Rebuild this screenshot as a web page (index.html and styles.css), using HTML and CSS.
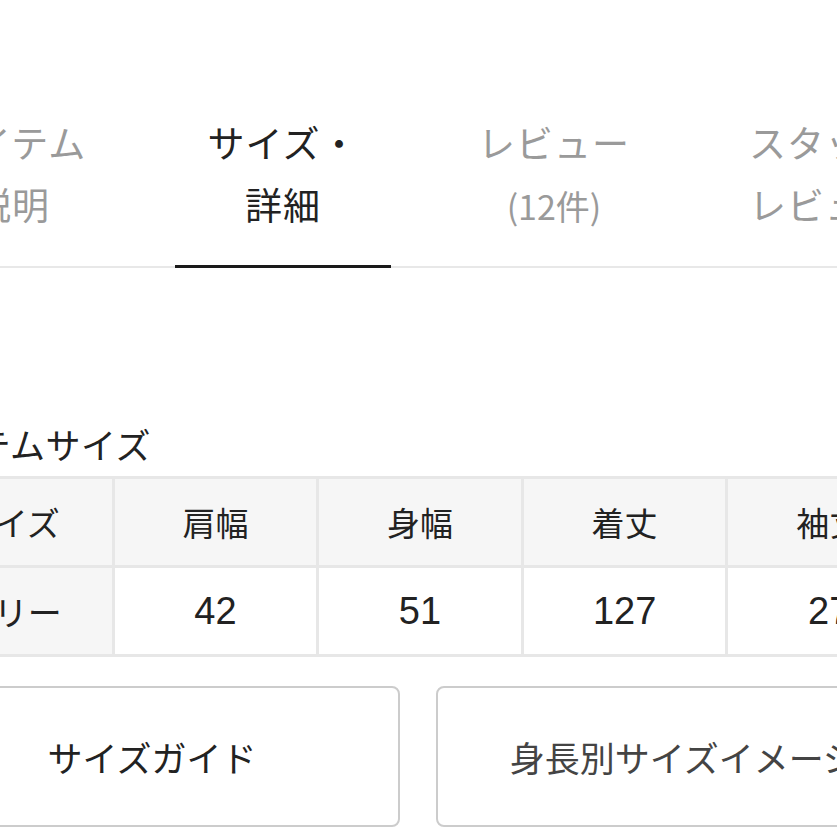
FILE: index.html
```html
<!DOCTYPE html>
<html lang="ja">
<head>
<meta charset="utf-8">
<title>サイズ・詳細</title>
<link rel="stylesheet" href="styles.css">
</head>
<body>
<div class="page">
  <nav class="tabs">
    <div class="tab">アイテム<br>説明</div>
    <div class="tab active">サイズ・<br>詳細</div>
    <div class="tab">レビュー<br><span class="count">(12件)</span></div>
    <div class="tab">スタッフ<br>レビュー</div>
  </nav>

  <section class="size-section">
    <h2 class="section-title">アイテムサイズ</h2>
    <table class="size-table">
      <colgroup>
        <col class="col"><col class="col"><col class="col"><col class="col"><col class="col">
      </colgroup>
      <thead>
        <tr>
          <th>サイズ</th>
          <th>肩幅</th>
          <th>身幅</th>
          <th>着丈</th>
          <th>袖丈</th>
        </tr>
      </thead>
      <tbody>
        <tr>
          <th class="row-head">フリー</th>
          <td class="num">42</td>
          <td class="num">51</td>
          <td class="num">127</td>
          <td class="num">27</td>
        </tr>
      </tbody>
    </table>

    <div class="buttons">
      <button class="btn">サイズガイド</button>
      <button class="btn btn-alt">身長別サイズイメージ</button>
    </div>
  </section>
</div>
</body>
</html>
```

FILE: styles.css
```css
html, body {
  margin: 0;
  padding: 0;
  background: #ffffff;
  overflow: hidden;
}

body {
  font-family: "Noto Sans CJK JP", "Noto Sans", sans-serif;
  color: #222222;
}

.page {
  margin-left: -93px;
  width: 1100px;
}

/* Tabs */
.tabs {
  display: flex;
  gap: 55px;
  margin-left: -3px;
  padding-top: 111px;
  border-bottom: 2px solid #e8e8e8;
}

.tab {
  width: 216px;
  flex: none;
  text-align: center;
  font-size: 37px;
  letter-spacing: 1px;
  line-height: 62px;
  color: #9a9a9a;
  padding-bottom: 29px;
}

.tab .count {
  font-size: 34px;
  letter-spacing: 0;
}

.tab.active {
  color: #222222;
  border-bottom: 3px solid #1a1a1a;
  margin-bottom: -2px;
}

/* Size section */
.section-title {
  margin: 152px 0 8px 0;
  font-size: 35px;
  letter-spacing: 0.5px;
  font-weight: 400;
  line-height: 48px;
  color: #222222;
}

.size-table {
  border-collapse: collapse;
  table-layout: fixed;
  width: 1024px;
}

.size-table .col {
  width: 204.6px;
}

.size-table th,
.size-table td {
  border: 3px solid #e7e7e7;
  height: 86px;
  padding: 0;
  text-align: center;
  vertical-align: middle;
  font-weight: 400;
}

.size-table thead th {
  background: #f6f6f6;
  font-size: 33px;
}

.size-table tbody td,
.size-table tbody th {
  font-size: 34px;
  height: 86px;
  background: #ffffff;
}

.size-table tbody .num {
  font-family: "Liberation Sans", "Noto Sans CJK JP", sans-serif;
  font-size: 38px;
}

.size-table tbody .row-head {
  background: #f6f6f6;
}

/* Buttons */
.buttons {
  display: flex;
  gap: 36px;
  margin-top: 29px;
  margin-left: -3px;
}

.btn {
  width: 496px;
  height: 141px;
  flex: none;
  background: #ffffff;
  border: 2px solid #cccccc;
  border-radius: 8px;
  font-family: "Noto Sans CJK JP", "Noto Sans", sans-serif;
  font-size: 35px;
  color: #222222;
  padding: 0;
}

.btn-alt {
  color: #444444;
}
```
